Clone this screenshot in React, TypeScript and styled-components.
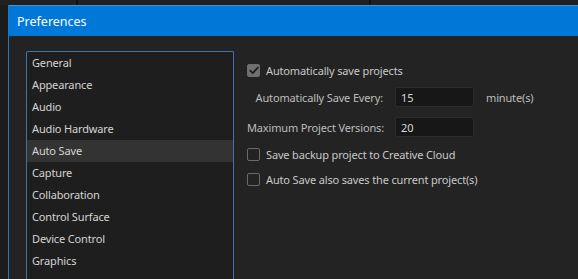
import React from "react";
import styled, { createGlobalStyle } from "styled-components";

const Global = createGlobalStyle`
  html, body { margin: 0; padding: 0; background: #1c1c1c; overflow: hidden; }
  body { font-family: "Noto Sans", "Open Sans", sans-serif; }
`;

const Page = styled.div`
  width: 578px;
  height: 279px;
  display: flex;
  flex-direction: column;
  overflow: hidden;
`;

const AppStrip = styled.div`
  height: 5px;
  display: flex;
  gap: 2px;
  background: #111;
  flex-shrink: 0;
`;

const StripPane = styled.div<{ $w?: number }>`
  background: #202020;
  ${(p) => (p.$w ? `width: ${p.$w}px;` : "flex: 1;")}
`;

const Dialog = styled.div`
  margin-left: 8px;
  flex: 1;
  display: flex;
  flex-direction: column;
  border-left: 1px solid #2a73c0;
  background: #232323;
  min-width: 0;
`;

const TitleBar = styled.div`
  height: 31px;
  background: #0078d7;
  border-top: 1px solid #3f93de;
  box-sizing: border-box;
  display: flex;
  align-items: center;
  padding-left: 8px;
  color: #ffffff;
  font-size: 12.5px;
  flex-shrink: 0;
`;

const Body = styled.div`
  display: flex;
  padding: 15px 0 0 17px;
  gap: 13px;
  flex: 1;
`;

const CategoryList = styled.div`
  width: 208px;
  box-sizing: border-box;
  border: 1px solid #3b74b0;
  border-bottom: none;
  border-radius: 2px 2px 0 0;
  background: #1e1e1e;
  display: flex;
  flex-direction: column;
  flex-shrink: 0;
  overflow: hidden;
`;

const Category = styled.div<{ $selected?: boolean }>`
  height: 22px;
  line-height: 22px;
  padding-left: 5px;
  font-size: 11px;
  letter-spacing: -0.15px;
  color: #d4d4d4;
  background: ${(p) => (p.$selected ? "#333333" : "transparent")};
  white-space: nowrap;
  flex-shrink: 0;
`;

const Settings = styled.div`
  display: flex;
  flex-direction: column;
  padding-top: 13px;
`;

const CheckRow = styled.label<{ $mt?: number }>`
  display: flex;
  align-items: center;
  gap: 6px;
  height: 13px;
  margin-top: ${(p) => p.$mt ?? 0}px;
  font-size: 11px;
  letter-spacing: -0.15px;
  color: #c8c8c8;
`;

const Box = styled.span<{ $checked?: boolean }>`
  width: 13px;
  height: 13px;
  box-sizing: border-box;
  border-radius: 2px;
  border: 1px solid ${(p) => (p.$checked ? "#6e6e6e" : "#6a6a6a")};
  background: ${(p) => (p.$checked ? "#707070" : "transparent")};
  display: flex;
  align-items: center;
  justify-content: center;
  flex-shrink: 0;
`;

const FieldGrid = styled.div`
  display: grid;
  grid-template-columns: 136px 79px auto;
  column-gap: 12px;
  row-gap: 10px;
  align-items: center;
  margin-top: 10px;
  margin-bottom: 11px;
`;

const FieldLabel = styled.span`
  text-align: right;
  font-size: 11px;
  letter-spacing: -0.15px;
  color: #bdbdbd;
  white-space: nowrap;
`;

const NumberInput = styled.div`
  height: 20px;
  box-sizing: border-box;
  background: #171717;
  border: 1px solid #2c2c2c;
  border-radius: 2px;
  font-size: 11px;
  color: #d8d8d8;
  padding-left: 5px;
  display: flex;
  align-items: center;
`;

const Unit = styled.span`
  font-size: 11px;
  letter-spacing: -0.15px;
  color: #bdbdbd;
`;

const Check = () => (
  <svg width="10" height="9" viewBox="0 0 10 9">
    <path d="M1.2 4.6 L3.8 7.1 L8.8 1.6" stroke="#1f1f1f" strokeWidth="1.8" fill="none" strokeLinecap="round" strokeLinejoin="round" />
  </svg>
);

const categories = [
  "General",
  "Appearance",
  "Audio",
  "Audio Hardware",
  "Auto Save",
  "Capture",
  "Collaboration",
  "Control Surface",
  "Device Control",
  "Graphics",
  "Labels",
];

export default function App() {
  return (
    <Page>
      <Global />
      <AppStrip>
        <StripPane $w={76} />
        <StripPane $w={291} />
        <StripPane />
      </AppStrip>
      <Dialog>
        <TitleBar>Preferences</TitleBar>
        <Body>
          <CategoryList>
            {categories.map((c) => (
              <Category key={c} $selected={c === "Auto Save"}>
                {c}
              </Category>
            ))}
          </CategoryList>
          <Settings>
            <CheckRow>
              <Box $checked>
                <Check />
              </Box>
              Automatically save projects
            </CheckRow>
            <FieldGrid>
              <FieldLabel>Automatically Save Every:</FieldLabel>
              <NumberInput>15</NumberInput>
              <Unit>minute(s)</Unit>
              <FieldLabel>Maximum Project Versions:</FieldLabel>
              <NumberInput>20</NumberInput>
              <span />
            </FieldGrid>
            <CheckRow>
              <Box />
              Save backup project to Creative Cloud
            </CheckRow>
            <CheckRow $mt={12}>
              <Box />
              Auto Save also saves the current project(s)
            </CheckRow>
          </Settings>
        </Body>
      </Dialog>
    </Page>
  );
}
